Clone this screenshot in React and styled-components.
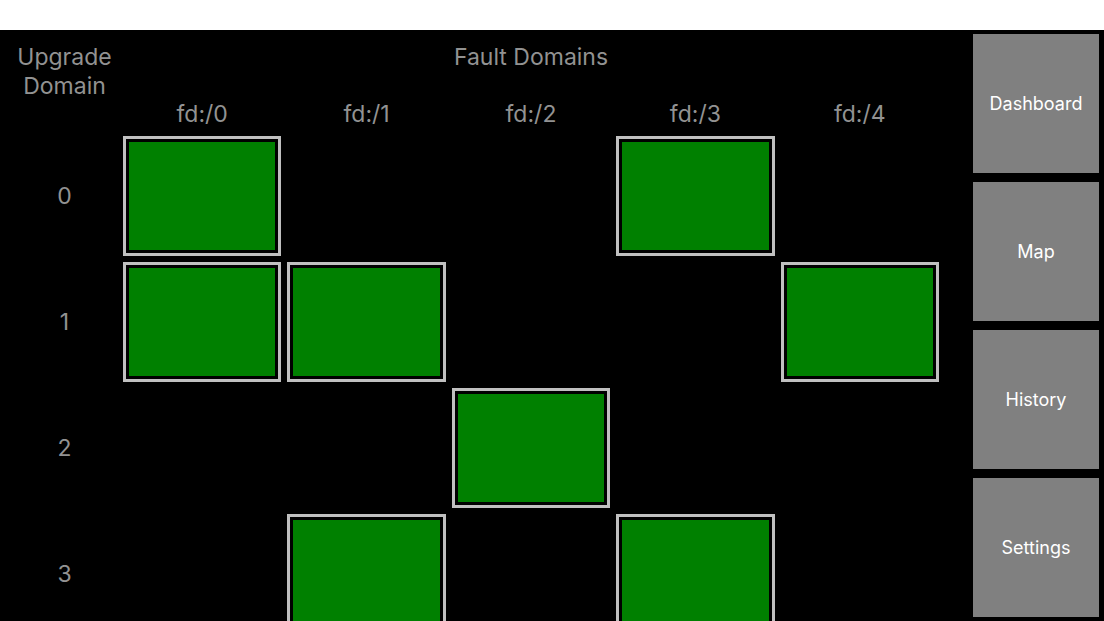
import React from "react";
import styled, { createGlobalStyle } from "styled-components";

const GlobalStyle = createGlobalStyle`
  *, *::before, *::after { box-sizing: border-box; }
  body {
    margin: 0;
    background: #fff;
    font-family: Inter, "Liberation Sans", sans-serif;
  }
`;

const Page = styled.div`
  display: flex;
  flex-direction: column;
  height: 100vh;
  padding-top: 30px;
`;

const Shell = styled.div`
  display: flex;
  flex: 1;
  min-height: 0;
  background: #000;
`;

const ClusterMap = styled.main`
  flex: 1;
  min-width: 0;
  overflow: hidden;
  padding: 13px 31px 0 9px;
`;

const DomainTable = styled.table`
  width: 100%;
  table-layout: fixed;
  border-collapse: collapse;
  color: #929292;
  font-size: 23px;
  line-height: 29px;
  text-align: center;
`;

const LabelColumn = styled.col`
  width: 111px;
`;

const Heading = styled.th`
  height: ${(p) => p.$height};
  padding: 0;
  font-weight: 400;
  vertical-align: ${(p) => p.$align || "top"};
`;

const Slot = styled.td`
  height: 126px;
  padding: 3px;
`;

const Node = styled.div`
  height: 120px;
  padding: 3px;
  border: 3px solid #c0c0c0;
  background: #008000 content-box;
`;

const Sidebar = styled.nav`
  display: grid;
  grid-auto-rows: 1fr;
  gap: 9px;
  width: 131px;
  padding: 4px 5px 4px 0;
`;

const NavButton = styled.button`
  border: 0;
  padding: 1px 0 0;
  background: #808080;
  color: #fff;
  font-family: inherit;
  font-size: 18px;
  line-height: 22px;
  cursor: pointer;
`;

const faultDomains = [0, 1, 2, 3, 4];

const upgradeDomains = [
  { id: 0, nodes: [0, 3] },
  { id: 1, nodes: [0, 1, 4] },
  { id: 2, nodes: [2] },
  { id: 3, nodes: [1, 3] },
];

const views = ["Dashboard", "Map", "History", "Settings"];

export default function App() {
  return (
    <Page>
      <GlobalStyle />
      <Shell>
        <ClusterMap>
          <DomainTable>
            <colgroup>
              <LabelColumn />
              {faultDomains.map((fd) => <col key={fd} />)}
            </colgroup>
            <thead>
              <tr>
                <Heading scope="col" rowSpan={2} $height="90px">Upgrade Domain</Heading>
                <Heading scope="colgroup" colSpan={5} $height="57px">Fault Domains</Heading>
              </tr>
              <tr>
                {faultDomains.map((fd) => (
                  <Heading key={fd} scope="col" $height="33px">fd:/{fd}</Heading>
                ))}
              </tr>
            </thead>
            <tbody>
              {upgradeDomains.map((ud) => (
                <tr key={ud.id}>
                  <Heading scope="row" $height="126px" $align="middle">{ud.id}</Heading>
                  {faultDomains.map((fd) => (
                    <Slot key={fd}>{ud.nodes.includes(fd) && <Node />}</Slot>
                  ))}
                </tr>
              ))}
            </tbody>
          </DomainTable>
        </ClusterMap>
        <Sidebar>
          {views.map((view) => (
            <NavButton key={view} type="button">{view}</NavButton>
          ))}
        </Sidebar>
      </Shell>
    </Page>
  );
}
